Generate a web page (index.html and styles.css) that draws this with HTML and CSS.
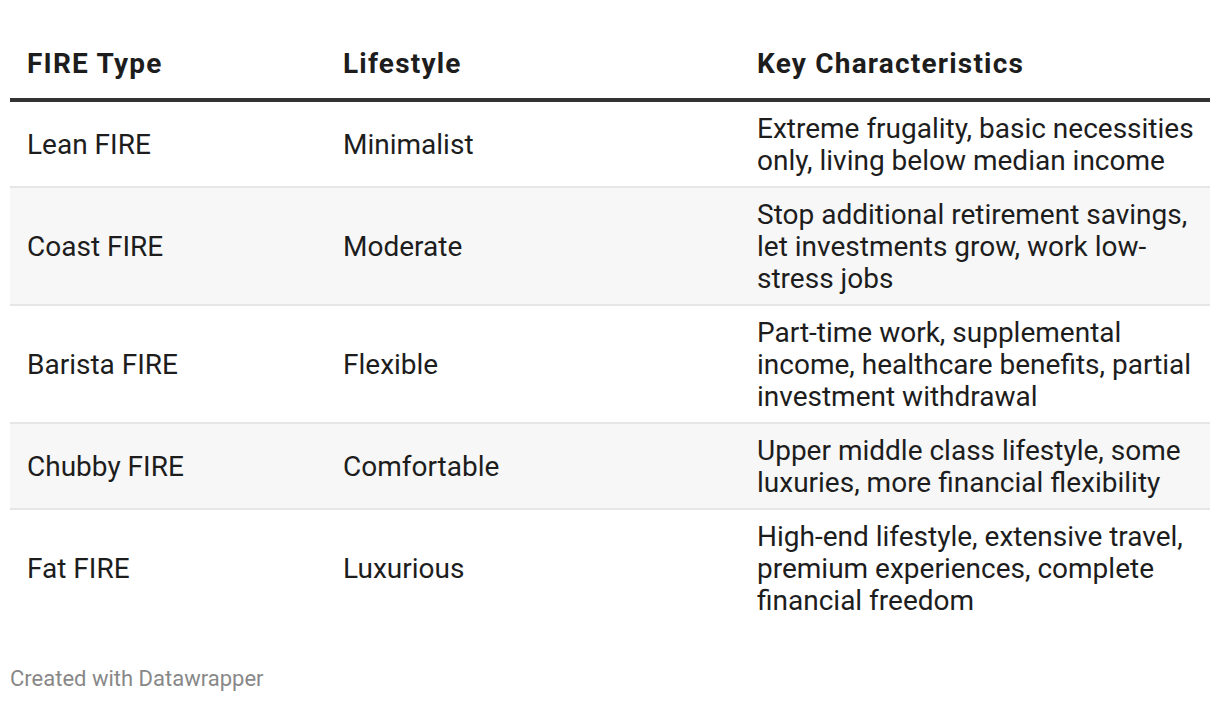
FILE: index.html
```html
<!DOCTYPE html>
<html>
<head>
<meta charset="utf-8">
<link rel="stylesheet" href="styles.css">
</head>
<body>
<div class="chart">
  <table class="tbl">
    <thead>
      <tr>
        <th class="c1">FIRE Type</th>
        <th class="c2">Lifestyle</th>
        <th class="c3">Key Characteristics</th>
      </tr>
    </thead>
    <tbody>
      <tr>
        <td>Lean FIRE</td>
        <td>Minimalist</td>
        <td>Extreme frugality, basic necessities only, living below median income</td>
      </tr>
      <tr class="alt">
        <td>Coast FIRE</td>
        <td>Moderate</td>
        <td>Stop additional retirement savings, let investments grow, work low-stress jobs</td>
      </tr>
      <tr>
        <td>Barista FIRE</td>
        <td>Flexible</td>
        <td>Part-time work, supplemental income, healthcare benefits, partial investment withdrawal</td>
      </tr>
      <tr class="alt">
        <td>Chubby FIRE</td>
        <td>Comfortable</td>
        <td>Upper middle class lifestyle, some luxuries, more financial flexibility</td>
      </tr>
      <tr>
        <td>Fat FIRE</td>
        <td>Luxurious</td>
        <td>High-end lifestyle, extensive travel, premium experiences, complete financial freedom</td>
      </tr>
    </tbody>
  </table>
  <div class="footer">Created with Datawrapper</div>
</div>
</body>
</html>
```
FILE: styles.css
```css
html, body {
  margin: 0;
  padding: 0;
  background: #ffffff;
}
body {
  font-family: Roboto, "Liberation Sans", sans-serif;
  color: #1d1d1d;
}
.chart {
  padding: 30px 10px 0 10px;
}
.tbl {
  width: 1200px;
  border-collapse: collapse;
  table-layout: fixed;
  font-size: 28px;
  line-height: 32px;
}
.tbl th {
  text-align: left;
  font-weight: 700;
  letter-spacing: 1.2px;
  padding: 18px 8px 18px 17px;
  border-bottom: 4px solid #333333;
  vertical-align: middle;
}
.tbl .c1 { width: 291px; }
.tbl .c2 { width: 389px; }
.tbl .c3 { width: auto; }
.tbl td {
  padding: 11px 8px 9px 17px;
  border-bottom: 2px solid #e6e6e6;
  vertical-align: middle;
  font-weight: 400;
}
.tbl tr.alt td {
  background: #f7f7f7;
}
.tbl tbody tr:last-child td {
  border-bottom: none;
}
.footer {
  margin-top: 40px;
  font-size: 22px;
  color: #888888;
  line-height: 26px;
}
```
